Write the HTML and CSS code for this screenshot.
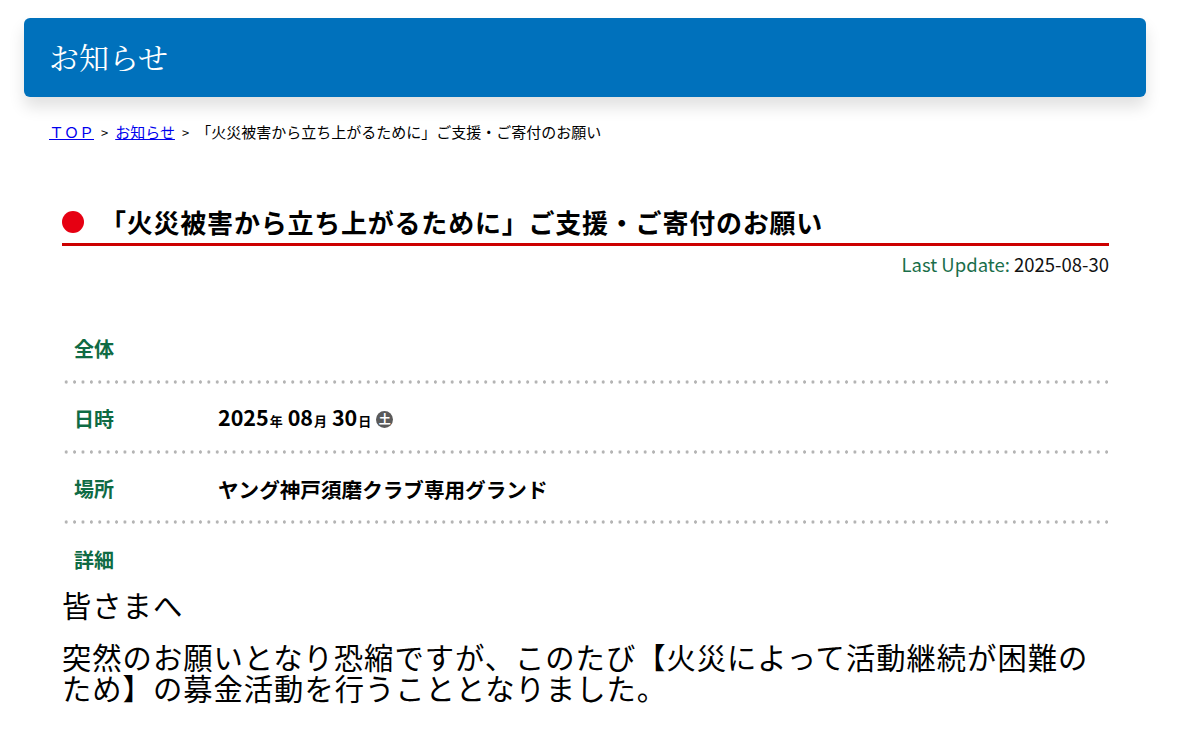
FILE: index.html
```html
<!DOCTYPE html>
<html lang="ja">
<head>
<meta charset="utf-8">
<title>お知らせ</title>
<link rel="stylesheet" href="styles.css">
</head>
<body>
<div class="page">
  <header class="page-head">
    <h1 class="page-title">お知らせ</h1>
  </header>
  <nav class="crumbs">
    <a href="#">ＴＯＰ</a><span class="sep">&gt;</span><a href="#">お知らせ</a><span class="sep">&gt;</span><span>「火災被害から立ち上がるために」ご支援・ご寄付のお願い</span>
  </nav>
  <main class="article">
    <h2 class="article-title"><span class="dot"></span><span>「火災被害から立ち上がるために」ご支援・ご寄付のお願い</span></h2>
    <p class="updated"><span class="updated-label">Last Update:</span> 2025-08-30</p>
    <dl class="info">
      <div class="row"><dt>全体</dt><dd></dd></div>
      <div class="row"><dt>日時</dt><dd class="date">2025<small>年</small> 08<small>月</small> 30<small>日</small> <span class="wd">土</span></dd></div>
      <div class="row"><dt>場所</dt><dd>ヤング神戸須磨クラブ専用グランド</dd></div>
      <div class="row last"><dt>詳細</dt><dd></dd></div>
    </dl>
    <div class="body-text">
      <p>皆さまへ</p>
      <p>突然のお願いとなり恐縮ですが、このたび【火災によって活動継続が困難のため】の募金活動を行うこととなりました。</p>
    </div>
  </main>
</div>
</body>
</html>
```

FILE: styles.css
```css
* { box-sizing: border-box; }
html, body { margin: 0; padding: 0; background: #fff; }
body { font-family: "Noto Sans CJK JP", "Noto Sans", sans-serif; color: #000; }

.page { padding: 18px 53px 0 24px; }

.page-head {
  background: #0071bc;
  border-radius: 6px;
  height: 79px;
  display: flex;
  align-items: center;
  padding-left: 25px;
  padding-top: 2px;
  box-shadow: 0 10px 16px rgba(0, 0, 0, 0.12);
}
.page-title {
  margin: 0;
  color: #fff;
  font-family: "Liberation Serif", "Noto Serif CJK JP", serif;
  font-weight: normal;
  font-size: 30px;
  line-height: 1;
}

.crumbs {
  margin-top: 24px;
  padding-left: 25px;
  font-size: 15px;
  line-height: 22px;
}
.crumbs a { color: #0000ee; text-decoration: underline; }
.crumbs .sep { margin: 0 7px; font-size: 13px; }

.article { padding: 0 37px 0 38px; margin-top: 61px; }

.article-title {
  margin: 0;
  display: flex;
  align-items: center;
  font-size: 26px;
  font-weight: bold;
  letter-spacing: 0.03em;
  line-height: 34px;
  padding-bottom: 4px;
  border-bottom: 3px solid #cc0000;
}
.article-title .dot {
  width: 22px; height: 22px; border-radius: 50%;
  background: #e60012;
  margin-right: 16px;
  flex: none;
}

.updated {
  margin: 6px 0 0;
  text-align: right;
  font-size: 18.5px;
  line-height: 24px;
  color: #111;
}
.updated-label { color: #1a6e4a; }

.info { margin: 38px 0 0; }
.info .row {
  display: flex;
  align-items: center;
  height: 70px;
  background-image: radial-gradient(circle, #b4b4b4 1.4px, transparent 1.9px);
  background-size: 8.4px 4px;
  background-repeat: repeat-x;
  background-position: 0 100%;
}
.info .row.last { background: none; height: auto; padding-top: 22px; }
.info dt {
  width: 156px;
  padding-left: 12px;
  font-size: 20px;
  font-weight: bold;
  color: #0f6b44;
  line-height: 28px;
}
.info dd {
  margin: 0;
  font-size: 20.6px;
  font-weight: bold;
  line-height: 28px;
}
.info dd.date { font-size: 21.5px; }
.info dd.date small { font-size: 13px; margin-left: 1px; }
.wd {
  display: inline-flex; align-items: center; justify-content: center;
  width: 17px; height: 17px; border-radius: 50%;
  background: #5a5a5a; color: #fff;
  font-size: 12px; line-height: 1; font-weight: bold;
  vertical-align: 2px;
}

.body-text { margin-top: 15px; }
.body-text p {
  margin: 0 0 21px;
  font-size: 29.3px;
  line-height: 31px;
  letter-spacing: 1px;
}
```
